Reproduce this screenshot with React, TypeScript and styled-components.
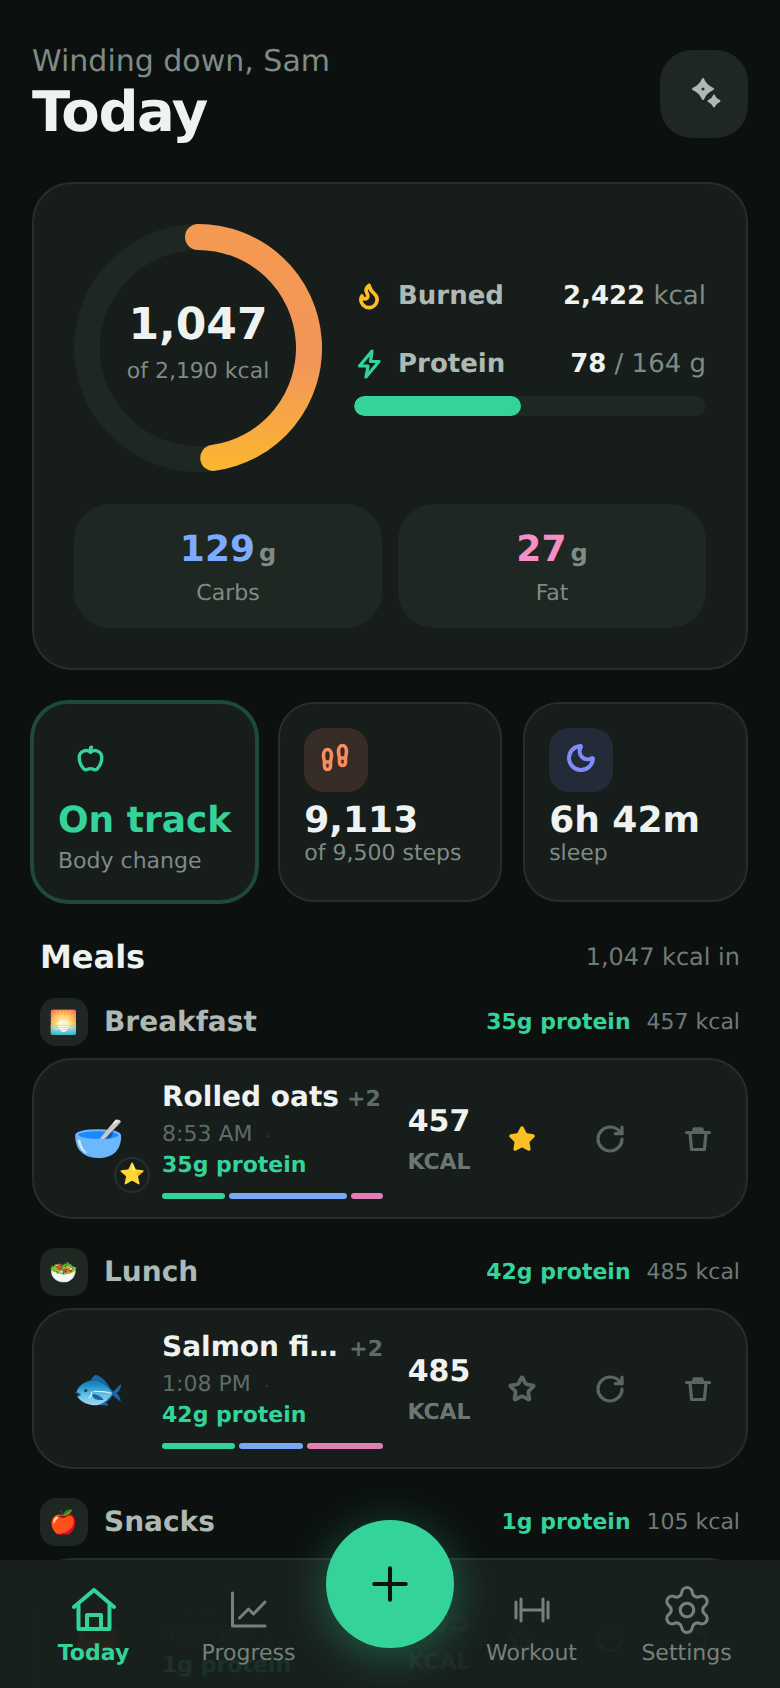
import styled, { createGlobalStyle } from 'styled-components'
import { Apple, Flame, Moon, Plus, RotateCw, Settings, Star } from 'lucide-react'

const GREEN = '#34d399'
const BLUE = '#7cabff'
const PINK = '#f490c6'

type Meal = {
  group: string
  groupIcon: string
  protein: number
  kcal: number
  name: string
  extra: string
  time: string
  icon: string
  favourite?: boolean
  split: [number, number, number]
}

const MEALS: Meal[] = [
  { group: 'Breakfast', groupIcon: '🌅', protein: 35, kcal: 457, name: 'Rolled oats', extra: '+2', time: '8:53 AM', icon: '🥣', favourite: true, split: [63, 118, 32] },
  { group: 'Lunch', groupIcon: '🥗', protein: 42, kcal: 485, name: 'Salmon fillet bowl', extra: '+2', time: '1:08 PM', icon: '🐟', split: [73, 64, 76] },
  { group: 'Snacks', groupIcon: '🍎', protein: 1, kcal: 105, name: 'Apple', extra: '', time: '4:29 PM', icon: '🍎', split: [10, 170, 33] },
]

const GlobalStyle = createGlobalStyle`
  html, body {
    margin: 0;
    padding: 0;
    background: #0c1110;
  }
  * {
    box-sizing: border-box;
  }
  body {
    font-family: "DejaVu Sans", "Noto Color Emoji", sans-serif;
    text-rendering: geometricPrecision;
  }
`

export default function App() {
  return (
    <>
      <GlobalStyle />
      <Shell>
        <Page>
          <Header>
            <div>
              <Greeting>Winding down, Sam</Greeting>
              <Title>Today</Title>
            </div>
            <SparkleButton>
              <SparkleIcon />
            </SparkleButton>
          </Header>

          <SummaryCard>
            <SummaryTop>
              <CalorieRing consumed={1047} goal={2190} />
              <SummaryStats>
                <StatRow>
                  <StatIcon>
                    <Flame size={28} strokeWidth={3.2} color="#fbbf24" />
                  </StatIcon>
                  <StatLabel>Burned</StatLabel>
                  <StatValue>
                    <strong>2,422</strong> kcal
                  </StatValue>
                </StatRow>
                <StatRow>
                  <StatIcon>
                    <BoltIcon />
                  </StatIcon>
                  <StatLabel>Protein</StatLabel>
                  <StatValue>
                    <strong>78</strong> / 164 g
                  </StatValue>
                </StatRow>
                <ProgressTrack>
                  <ProgressFill style={{ width: `${(78 / 164) * 100}%` }} />
                </ProgressTrack>
              </SummaryStats>
            </SummaryTop>
            <MacroGrid>
              <MacroTile>
                <MacroValue $color={BLUE}>
                  129<small>g</small>
                </MacroValue>
                <MacroLabel>Carbs</MacroLabel>
              </MacroTile>
              <MacroTile>
                <MacroValue $color={PINK}>
                  27<small>g</small>
                </MacroValue>
                <MacroLabel>Fat</MacroLabel>
              </MacroTile>
            </MacroGrid>
          </SummaryCard>

          <StatGrid>
            <StatCard $active>
              <StatTile $bg="transparent">
                <Apple size={27} strokeWidth={3} color={GREEN} />
              </StatTile>
              <StatCardValue $color={GREEN} $gap={8}>On track</StatCardValue>
              <StatCardLabel>Body change</StatCardLabel>
            </StatCard>
            <StatCard>
              <StatTile $bg="#362b25">
                <SolesIcon />
              </StatTile>
              <StatCardValue>9,113</StatCardValue>
              <StatCardLabel>of 9,500 steps</StatCardLabel>
            </StatCard>
            <StatCard>
              <StatTile $bg="#242b38">
                <Moon size={32} strokeWidth={3} color="#818cf8" />
              </StatTile>
              <StatCardValue>6h 42m</StatCardValue>
              <StatCardLabel>sleep</StatCardLabel>
            </StatCard>
          </StatGrid>

          <SectionHead>
            <SectionTitle>Meals</SectionTitle>
            <SectionNote>1,047 kcal in</SectionNote>
          </SectionHead>

          {MEALS.map((meal) => (
            <MealGroup key={meal.group}>
              <GroupHead>
                <GroupTile>{meal.groupIcon}</GroupTile>
                <GroupName>{meal.group}</GroupName>
                <GroupProtein>{meal.protein}g protein</GroupProtein>
                <GroupKcal>{meal.kcal} kcal</GroupKcal>
              </GroupHead>
              <MealCard>
                <Thumb>
                  {meal.icon}
                  {meal.favourite && <ThumbBadge>⭐</ThumbBadge>}
                </Thumb>
                <MealInfo>
                  <MealTitleRow>
                    <MealName>{meal.name}</MealName>
                    <MealExtra>{meal.extra}</MealExtra>
                  </MealTitleRow>
                  <MealTime>
                    {meal.time}
                    <TimeDot>·</TimeDot>
                  </MealTime>
                  <MealProtein>{meal.protein}g protein</MealProtein>
                  <SplitBar>
                    <SplitPart $grow={meal.split[0]} $color={GREEN} />
                    <SplitPart $grow={meal.split[1]} $color="#79a8f8" />
                    <SplitPart $grow={meal.split[2]} $color="#df7fb4" />
                  </SplitBar>
                </MealInfo>
                <MealKcal>
                  <strong>{meal.kcal}</strong>
                  <span>KCAL</span>
                </MealKcal>
                <MealActions>
                  <ActionButton>
                    {meal.favourite ? (
                      <Star size={28} strokeWidth={2} color="#fbbf24" fill="#fbbf24" />
                    ) : (
                      <Star size={28} strokeWidth={3.2} color="#5a6662" />
                    )}
                  </ActionButton>
                  <ActionButton>
                    <RotateCw size={32} strokeWidth={2.4} color="#5a6662" />
                  </ActionButton>
                  <ActionButton>
                    <TrashIcon />
                  </ActionButton>
                </MealActions>
              </MealCard>
            </MealGroup>
          ))}
        </Page>

        <TabBar>
          <TabItem $active>
            <TabIcon><HomeIcon /></TabIcon>
            Today
          </TabItem>
          <TabItem>
            <TabIcon><ChartIcon /></TabIcon>
            Progress
          </TabItem>
          <FabSlot>
            <Fab>
              <Plus size={54} strokeWidth={1.8} color="#0d1311" />
            </Fab>
          </FabSlot>
          <TabItem>
            <TabIcon><DumbbellIcon /></TabIcon>
            Workout
          </TabItem>
          <TabItem>
            <TabIcon><Settings size={54} strokeWidth={1.4} /></TabIcon>
            Settings
          </TabItem>
        </TabBar>
      </Shell>
    </>
  )
}

function CalorieRing({ consumed, goal }: { consumed: number; goal: number }) {
  const r = 111
  const angle = (consumed / goal) * Math.PI * 2
  const endX = 124 + r * Math.sin(angle)
  const endY = 124 - r * Math.cos(angle)
  return (
    <RingBox>
      <svg width="248" height="248" viewBox="0 0 248 248" fill="none">
        <defs>
          <linearGradient id="ringStroke" gradientUnits="userSpaceOnUse" x1="0" y1="0" x2="0" y2="248">
            <stop offset="0" stopColor="#f59a50" />
            <stop offset="0.55" stopColor="#f2955a" />
            <stop offset="1" stopColor="#fbb72f" />
          </linearGradient>
        </defs>
        <circle cx="124" cy="124" r={r} stroke="#1f2723" strokeWidth="26" />
        <path
          d={`M124 13A${r} ${r} 0 0 1 ${endX} ${endY}`}
          stroke="url(#ringStroke)"
          strokeWidth="26"
          strokeLinecap="round"
        />
      </svg>
      <RingText>
        <RingValue>1,047</RingValue>
        <RingCaption>of 2,190 kcal</RingCaption>
      </RingText>
    </RingBox>
  )
}

function SparkleIcon() {
  return (
    <svg width="40" height="40" viewBox="0 0 40 40">
      <g fill="#aeb9b4" stroke="#aeb9b4" strokeWidth="2" strokeLinejoin="round">
        <path d="M19 5Q22 12 29 15Q22 18 19 25Q16 18 9 15Q16 12 19 5Z" />
        <path d="M30 21.5Q31.5 25.5 35.5 27Q31.5 28.5 30 32.5Q28.5 28.5 24.5 27Q28.5 25.5 30 21.5Z" />
      </g>
      <circle cx="19" cy="15" r="1.6" fill="#2c3531" />
    </svg>
  )
}

function BoltIcon() {
  return (
    <svg width="24" height="32" viewBox="0 0 24 32" fill="none">
      <path
        d="M15 3L2.5 18H11L9 29L22 13.5H13.5Z"
        stroke={GREEN}
        strokeWidth="3.2"
        strokeLinejoin="round"
      />
    </svg>
  )
}

// two upright shoe soles, the right one a step ahead
function SolesIcon() {
  const sole = 'M0 6C0 2.5 1.6 0 4 0C6.4 0 8 2.5 8 6C8 9 7 10.5 7 13V17A3 3 0 0 1 1 17V13C1 10.5 0 9 0 6Z'
  return (
    <svg width="32" height="32" viewBox="0 0 32 32" fill="none" stroke="#f78c5c" strokeWidth="3.6" strokeLinejoin="round">
      <g transform="translate(3.5 7.5)">
        <path d={sole} />
        <path d="M1 12.5H7" />
      </g>
      <g transform="translate(18.5 3.5)">
        <path d={sole} />
        <path d="M1 12.5H7" />
      </g>
    </svg>
  )
}

function TrashIcon() {
  return (
    <svg width="28" height="28" viewBox="0 0 28 28" fill="none">
      <path d="M2.5 7.5H25.5" stroke="#5a6662" strokeWidth="3.2" strokeLinecap="round" />
      <path d="M9 6V4.5A1.5 1.5 0 0 1 10.5 3H17.5A1.5 1.5 0 0 1 19 4.5V6Z" fill="#5a6662" stroke="#5a6662" strokeWidth="1.5" />
      <path d="M6 8L7.6 24.5H20.4L22 8" stroke="#5a6662" strokeWidth="3.2" strokeLinejoin="round" />
    </svg>
  )
}

function HomeIcon() {
  return (
    <svg width="44" height="44" viewBox="0 0 44 44" fill="none" stroke="currentColor" strokeWidth="4" strokeLinecap="round" strokeLinejoin="round">
      <path d="M2 19L22 2L42 19" />
      <path d="M6.5 17V41H37.5V17" />
      <path d="M15 41V27H29V41" />
    </svg>
  )
}

function ChartIcon() {
  return (
    <svg width="44" height="44" viewBox="0 0 44 44" fill="none" stroke="currentColor" strokeWidth="3" strokeLinecap="round" strokeLinejoin="round">
      <path d="M5.5 5V38H38" />
      <path d="M12.5 30L21.5 21L26.5 26L38 14" />
    </svg>
  )
}

function DumbbellIcon() {
  return (
    <svg width="44" height="44" viewBox="0 0 44 44" fill="none" stroke="currentColor" strokeWidth="3" strokeLinecap="round">
      <path d="M6 14V30" />
      <path d="M11 11V33" />
      <path d="M33 11V33" />
      <path d="M38 14V30" />
      <path d="M11 22H33" />
    </svg>
  )
}

const Shell = styled.div`
  position: relative;
  height: 100vh;
  overflow: hidden;
  background: #0c1110;
  color: #eef2f0;
`

const Page = styled.main`
  padding: 40px 32px 0;
`

const Header = styled.header`
  display: flex;
  align-items: center;
  justify-content: space-between;
  height: 110px;
  margin-bottom: 32px;
`

const Greeting = styled.div`
  font-size: 30px;
  line-height: 36px;
  color: #7f8b86;
`

const Title = styled.h1`
  margin: 2px 0 3px;
  font-size: 56px;
  line-height: 62px;
  font-weight: 700;
  letter-spacing: -1.4px;
  color: #eef2f0;
`

const SparkleButton = styled.button`
  display: flex;
  align-items: center;
  justify-content: center;
  width: 88px;
  height: 88px;
  margin-bottom: 2px;
  padding: 0;
  border: 0;
  border-radius: 32px;
  background: #1f2723;
`

const SummaryCard = styled.section`
  padding: 40px;
  border: 2px solid #262f2b;
  border-radius: 40px;
  background: #161d1b;
`

const SummaryTop = styled.div`
  display: flex;
  align-items: center;
  gap: 32px;
`

const RingBox = styled.div`
  position: relative;
  flex: none;
  width: 248px;
  height: 248px;
`

const RingText = styled.div`
  position: absolute;
  inset: 0;
  display: flex;
  flex-direction: column;
  align-items: center;
  justify-content: center;
  padding-bottom: 11px;
`

const RingValue = styled.div`
  margin-bottom: 5px;
  font-size: 44px;
  line-height: 54px;
  font-weight: 700;
  color: #eef2f0;
`

const RingCaption = styled.div`
  font-size: 22px;
  line-height: 30px;
  color: #7f8b86;
`

const SummaryStats = styled.div`
  flex: 1;
  display: flex;
  flex-direction: column;
  gap: 36px;
`

const StatRow = styled.div`
  display: flex;
  align-items: center;
  height: 32px;
  font-size: 26px;
`

const StatIcon = styled.span`
  display: flex;
  align-items: center;
  justify-content: center;
  width: 30px;
  margin-right: 14px;
`

const StatLabel = styled.span`
  flex: 1;
  font-weight: 700;
  color: #aeb9b4;
`

const StatValue = styled.span`
  color: #7f8b86;

  strong {
    font-weight: 700;
    color: #eef2f0;
  }
`

const ProgressTrack = styled.div`
  height: 20px;
  margin-top: -20px;
  border-radius: 10px;
  background: #1f2723;
  overflow: hidden;
`

const ProgressFill = styled.div`
  height: 100%;
  border-radius: 10px;
  background: ${GREEN};
`

const MacroGrid = styled.div`
  display: grid;
  grid-template-columns: 1fr 1fr;
  gap: 16px;
  margin-top: 32px;
`

const MacroTile = styled.div`
  display: flex;
  flex-direction: column;
  align-items: center;
  justify-content: center;
  height: 124px;
  padding-top: 5px;
  border-radius: 36px;
  background: #1f2723;
`

const MacroValue = styled.div<{ $color: string }>`
  font-size: 36px;
  line-height: 44px;
  font-weight: 700;
  color: ${(p) => p.$color};

  small {
    margin-left: 4px;
    font-size: 24px;
    color: #7f8b86;
  }
`

const MacroLabel = styled.div`
  margin-top: 4px;
  font-size: 22px;
  line-height: 30px;
  color: #7f8b86;
`

const StatGrid = styled.div`
  display: grid;
  grid-template-columns: 225fr 224fr 225fr;
  gap: 21px;
  margin-top: 32px;
`

const StatCard = styled.div<{ $active?: boolean }>`
  padding: 24px 24px 25px;
  border: 2px solid ${(p) => (p.$active ? '#1f4a3a' : '#262f2b')};
  border-radius: 36px;
  background: #161d1b;
  box-shadow: ${(p) => (p.$active ? '0 0 0 2px #1f4a3a' : 'none')};
`

const StatTile = styled.div<{ $bg: string }>`
  display: flex;
  align-items: center;
  justify-content: center;
  width: 64px;
  height: 64px;
  padding-bottom: 4px;
  border-radius: 20px;
  background: ${(p) => p.$bg};
`

const StatCardValue = styled.div<{ $color?: string; $gap?: number }>`
  margin-top: 7px;
  margin-bottom: ${(p) => (p.$gap ?? 0) - 2}px;
  font-size: 36px;
  line-height: 44px;
  font-weight: 700;
  white-space: nowrap;
  color: ${(p) => p.$color ?? '#eef2f0'};
`

const StatCardLabel = styled.div`
  font-size: 22px;
  line-height: 26px;
  white-space: nowrap;
  color: #7f8b86;
`

const SectionHead = styled.div`
  display: flex;
  align-items: center;
  justify-content: space-between;
  margin-top: 36px;
  padding: 0 8px;
`

const SectionTitle = styled.h2`
  margin: 0;
  font-size: 32px;
  line-height: 38px;
  font-weight: 700;
  color: #eef2f0;
`

const SectionNote = styled.span`
  font-size: 24px;
  color: #6f7b76;
`

const MealGroup = styled.section`
  margin-top: 29px;

  ${SectionHead} + & {
    margin-top: 22px;
  }
`

const GroupHead = styled.div`
  display: flex;
  align-items: center;
  height: 48px;
  margin-bottom: 12px;
  padding: 0 8px;
`

const GroupTile = styled.span`
  display: flex;
  align-items: center;
  justify-content: center;
  width: 48px;
  height: 48px;
  margin-right: 16px;
  border-radius: 16px;
  background: #1f2723;
  font-size: 23px;
`

const GroupName = styled.span`
  flex: 1;
  padding-bottom: 2px;
  font-size: 28px;
  font-weight: 700;
  color: #aeb9b4;
`

const GroupProtein = styled.span`
  font-size: 22px;
  font-weight: 700;
  color: ${GREEN};
`

const GroupKcal = styled.span`
  margin-left: 16px;
  font-size: 22px;
  color: #6f7b76;
`

const MealCard = styled.article`
  display: flex;
  align-items: center;
  height: 161px;
  padding: 0 4px 0 23px;
  border: 2px solid #262f2b;
  border-radius: 40px;
  background: #161d1b;
`

const Thumb = styled.div`
  position: relative;
  flex: none;
  display: flex;
  align-items: center;
  justify-content: center;
  width: 84px;
  height: 84px;
  font-size: 42px;
`

const ThumbBadge = styled.span`
  position: absolute;
  right: -9px;
  bottom: -12px;
  display: flex;
  align-items: center;
  justify-content: center;
  width: 36px;
  height: 36px;
  border: 2px solid #262f2b;
  border-radius: 50%;
  background: #161d1b;
  font-size: 21px;
`

const MealInfo = styled.div`
  flex: none;
  width: 221px;
  margin-left: 21px;
`

const MealTitleRow = styled.div`
  display: flex;
  align-items: baseline;
  height: 36px;
  margin-top: 1px;
  line-height: 36px;
`

const MealName = styled.span`
  min-width: 0;
  overflow: hidden;
  font-size: 28px;
  font-weight: 700;
  white-space: nowrap;
  text-overflow: ellipsis;
  color: #eef2f0;
`

const MealExtra = styled.span`
  flex: none;
  margin-left: 8px;
  font-size: 22px;
  font-weight: 700;
  color: #5f6b66;
`

const MealTime = styled.div`
  margin-top: 5px;
  font-size: 22px;
  line-height: 30px;
  color: #5f6b66;
`

const TimeDot = styled.span`
  margin-left: 14px;
  font-size: 14px;
  color: #3b4541;
`

const MealProtein = styled.div`
  font-size: 22px;
  line-height: 28px;
  font-weight: 700;
  color: ${GREEN};
`

const SplitBar = styled.div`
  display: flex;
  gap: 4px;
  height: 6px;
  margin-top: 13px;
`

const SplitPart = styled.span<{ $grow: number; $color: string }>`
  flex: ${(p) => p.$grow} 1 0;
  border-radius: 3px;
  background: ${(p) => p.$color};
`

const MealKcal = styled.div`
  flex: none;
  display: flex;
  flex-direction: column;
  align-items: center;
  gap: 9px;
  width: 64px;
  margin-left: 24px;
  padding-top: 3px;

  strong {
    font-size: 30px;
    line-height: 36px;
    font-weight: 700;
    color: #eef2f0;
  }

  span {
    font-size: 22px;
    line-height: 28px;
    font-weight: 700;
    color: #6b7772;
  }
`

const MealActions = styled.div`
  display: flex;
  margin-left: auto;
`

const ActionButton = styled.button`
  display: flex;
  align-items: center;
  justify-content: center;
  width: 88px;
  height: 88px;
  padding: 0;
  border: 0;
  background: transparent;
`

const TabBar = styled.nav`
  position: absolute;
  left: 0;
  right: 0;
  bottom: 0;
  display: flex;
  height: 128px;
  padding: 0 16px;
  background: linear-gradient(
    rgba(24, 32, 29, 1) 0%,
    rgba(24, 32, 29, 1) 38%,
    rgba(24, 32, 29, 0.96) 60%,
    rgba(24, 32, 29, 0.9) 80%,
    rgba(24, 32, 29, 0.9) 100%
  );
`

const TabItem = styled.div<{ $active?: boolean }>`
  flex: 1;
  display: flex;
  flex-direction: column;
  align-items: center;
  gap: 7px;
  padding-top: 27px;
  font-size: 22px;
  line-height: 28px;
  font-weight: ${(p) => (p.$active ? 700 : 400)};
  color: ${(p) => (p.$active ? GREEN : '#75817c')};
`

const TabIcon = styled.span`
  display: flex;
  align-items: center;
  justify-content: center;
  height: 46px;
`

const FabSlot = styled.div`
  position: relative;
  flex: none;
  width: 128px;
`

const Fab = styled.button`
  position: absolute;
  top: -40px;
  left: 0;
  display: flex;
  align-items: center;
  justify-content: center;
  width: 128px;
  height: 128px;
  padding: 0;
  border: 0;
  border-radius: 50%;
  background: ${GREEN};
  box-shadow: 0 8px 44px rgba(52, 211, 153, 0.35);
`
